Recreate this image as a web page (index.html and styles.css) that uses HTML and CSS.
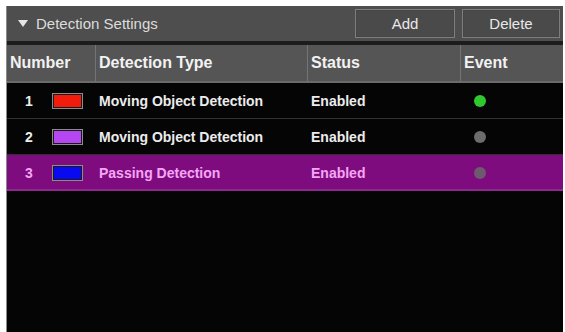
FILE: index.html
```html
<!DOCTYPE html>
<html lang="en">
<head>
    <meta charset="UTF-8">
    <title>Detection Settings</title>
    <link rel="stylesheet" href="styles.css">
</head>
<body>

<div class="panel">
    <div class="titlebar">
        <div class="title">
            <span class="arrow"></span>
            Detection Settings
        </div>
        <div class="buttons">
            <a class="btn btn-add">Add</a>
            <a class="btn btn-delete">Delete</a>
        </div>
    </div>
    <div class="divider"></div>

    <div class="grid head">
        <div class="cell">Number</div>
        <div class="cell">Detection Type</div>
        <div class="cell">Status</div>
        <div class="cell">Event</div>
    </div>

    <div class="grid row">
        <div class="cell num"><span class="idx">1</span><span class="swatch"><i class="red"></i></span></div>
        <div class="cell">Moving Object Detection</div>
        <div class="cell">Enabled</div>
        <div class="cell"><span class="dot on"></span></div>
    </div>
    <div class="grid row">
        <div class="cell num"><span class="idx">2</span><span class="swatch"><i class="violet"></i></span></div>
        <div class="cell">Moving Object Detection</div>
        <div class="cell">Enabled</div>
        <div class="cell"><span class="dot"></span></div>
    </div>
    <div class="grid row selected">
        <div class="cell num"><span class="idx">3</span><span class="swatch"><i class="blue"></i></span></div>
        <div class="cell">Passing Detection</div>
        <div class="cell">Enabled</div>
        <div class="cell"><span class="dot"></span></div>
    </div>
</div>

</body>
</html>
```

FILE: styles.css
```css
body {
    margin: 0;
    background: #fff;
    font-family: "Liberation Sans", Arial, sans-serif;
}

.panel {
    margin: 6px 0 0 6px;
    width: 557px;
    height: 326px;
    background: #050505;
    border-left: 1px solid #8a8a8a;
    box-sizing: border-box;
    overflow: hidden;
}

.titlebar {
    height: 35px;
    background: #4e4e4e;
    display: flex;
    align-items: center;
    justify-content: space-between;
    padding: 0 3px 0 11px;
}

.title {
    display: flex;
    align-items: center;
    gap: 8px;
    color: #dcdcdc;
    font-size: 15px;
}

.arrow {
    width: 0;
    height: 0;
    border-left: 5px solid transparent;
    border-right: 5px solid transparent;
    border-top: 7px solid #e6e6e6;
}

.buttons {
    display: flex;
    gap: 7px;
}

.btn {
    display: flex;
    align-items: center;
    justify-content: center;
    width: 100px;
    height: 29px;
    box-sizing: border-box;
    border: 1px solid #7e7e7e;
    box-shadow: inset 0 0 0 1px #464646;
    background: #4a4a4a;
    color: #e8e8e8;
    font-size: 15px;
    cursor: pointer;
}

.btn-delete {
    width: 98px;
}

.divider {
    height: 4px;
    background: #1c1c1c;
}

.grid {
    display: grid;
    grid-template-columns: 88px 212px 153px 1fr;
}

.head {
    height: 38px;
    background: #555;
    border-bottom: 2px solid #6c6c6c;
    box-sizing: border-box;
    color: #f2f2f2;
    font-weight: bold;
    font-size: 16px;
}

.head .cell {
    border-left: 1px solid #747474;
    padding-left: 3px;
}

.head .cell:first-child {
    border-left: 0;
    padding-left: 3px;
}

.cell {
    display: flex;
    align-items: center;
}

.row {
    height: 36px;
    border-bottom: 1px solid #303030;
    box-sizing: border-box;
    color: #ececec;
    font-weight: bold;
    font-size: 14px;
}

.row .cell {
    padding-left: 4px;
}

.row .num {
    padding-left: 18px;
}

.idx {
    width: 27px;
}

.swatch {
    width: 31px;
    height: 16px;
    box-sizing: border-box;
    border: 1px solid #8c8c8c;
    padding: 1px;
    background: #1a1a1a;
    display: flex;
}

.swatch i {
    flex: 1;
}

.red {
    background: #f21c0c;
}

.violet {
    background: #b546f2;
}

.blue {
    background: #0a0af0;
}

.dot {
    width: 12px;
    height: 12px;
    border-radius: 50%;
    background: #6c6c6c;
    margin-left: 10px;
}

.dot.on {
    background: #2fc82f;
}

.selected {
    background: #7f0c7f;
    color: #f4a6f4;
    border-bottom: 0;
    box-shadow: inset 0 -2px 0 #8e2a8e;
}

.selected .dot {
    background: #6e5a6e;
}
```
